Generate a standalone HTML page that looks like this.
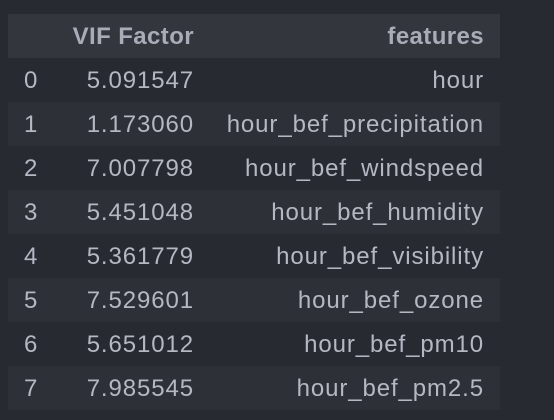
<!DOCTYPE html>
<html><head><style>
body{margin:0;background:#272a31;width:554px;height:420px;overflow:hidden;font-family:"Liberation Sans",sans-serif;}
table{position:absolute;left:8px;top:14px;border-collapse:collapse;width:492px;}
td,th{height:44px;padding:2px 0 0 0;box-sizing:border-box;font-size:24px;letter-spacing:0.9px;color:#b4b8c2;white-space:nowrap;}
th{color:#a8acb7;font-weight:bold;background:#34363d;letter-spacing:0.4px;}
tr.o td{background:#2d3037;}
.i{width:64px;text-align:left;padding-left:16px;}
.v{width:122px;text-align:right;}
.f{text-align:right;padding-right:16px;}
</style></head><body>
<table>
<tr><th class="i"></th><th class="v">VIF Factor</th><th class="f">features</th></tr>
<tr><td class="i">0</td><td class="v">5.091547</td><td class="f">hour</td></tr>
<tr class="o"><td class="i">1</td><td class="v">1.173060</td><td class="f">hour_bef_precipitation</td></tr>
<tr><td class="i">2</td><td class="v">7.007798</td><td class="f">hour_bef_windspeed</td></tr>
<tr class="o"><td class="i">3</td><td class="v">5.451048</td><td class="f">hour_bef_humidity</td></tr>
<tr><td class="i">4</td><td class="v">5.361779</td><td class="f">hour_bef_visibility</td></tr>
<tr class="o"><td class="i">5</td><td class="v">7.529601</td><td class="f">hour_bef_ozone</td></tr>
<tr><td class="i">6</td><td class="v">5.651012</td><td class="f">hour_bef_pm10</td></tr>
<tr class="o"><td class="i">7</td><td class="v">7.985545</td><td class="f">hour_bef_pm2.5</td></tr>
</table>
</body></html>
